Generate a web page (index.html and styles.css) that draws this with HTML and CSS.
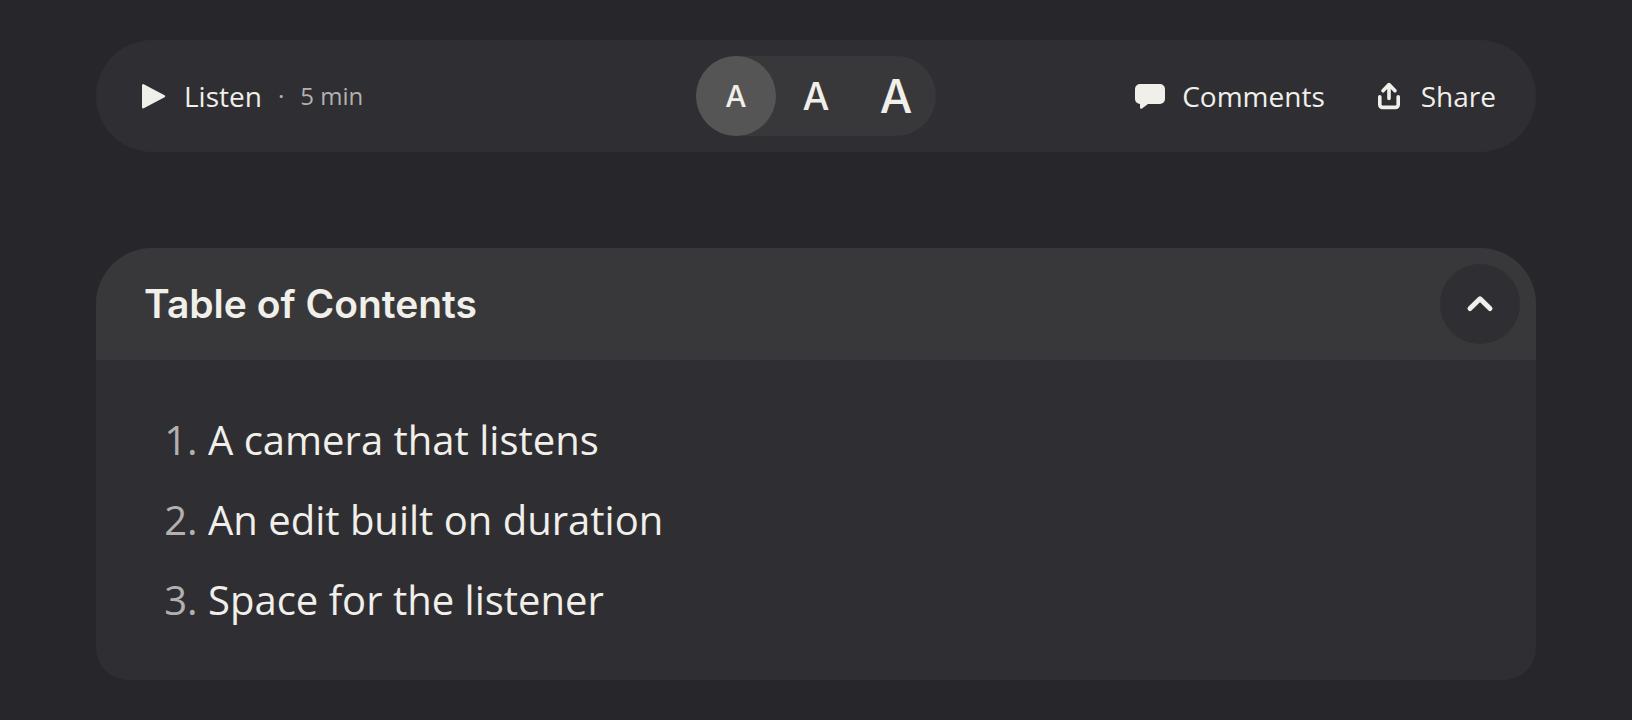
FILE: index.html
```html
<!DOCTYPE html>
<html lang="en">
<head>
    <meta charset="UTF-8">
    <meta name="viewport" content="width=device-width, initial-scale=1.0">
    <title>Article</title>
    <link rel="stylesheet" href="styles.css">
</head>
<body>
    <main class="article">
        <div class="toolbar">
            <div class="toolbar-start">
                <button type="button" class="action">
                    <svg class="icon" viewBox="0 0 32 32" aria-hidden="true">
                        <path d="M7.2 5.2v22L28 16.2z" fill="currentColor" stroke="currentColor" stroke-width="2.4" stroke-linejoin="round"></path>
                    </svg>
                    Listen
                </button>
                <span class="separator">·</span>
                <span class="duration">5 min</span>
            </div>

            <div class="text-size" role="group" aria-label="Text size">
                <button type="button" class="size size-small active" aria-pressed="true">A</button>
                <button type="button" class="size size-medium" aria-pressed="false">A</button>
                <button type="button" class="size size-large" aria-pressed="false">A</button>
            </div>

            <div class="toolbar-end">
                <button type="button" class="action">
                    <svg class="icon" viewBox="0 0 32 32" aria-hidden="true">
                        <path d="M6 4h20a5 5 0 0 1 5 5v10a5 5 0 0 1-5 5H14l-6 4.500Q6 29.500 6 27.500V24a5 5 0 0 1-5-5V9a5 5 0 0 1 5-5z" fill="currentColor"></path>
                    </svg>
                    Comments
                </button>
                <button type="button" class="action">
                    <svg class="icon" viewBox="0 0 32 32" aria-hidden="true" fill="none" stroke="currentColor" stroke-width="3.6" stroke-linecap="round" stroke-linejoin="round">
                        <path d="M6.8 16.800v8a2.600 2.600 0 0 0 2.600 2.600h13.200a2.600 2.600 0 0 0 2.600-2.600v-8"></path>
                        <path d="M16 5v13.500M10 10.800l6-6.200 6 6.200"></path>
                    </svg>
                    Share
                </button>
            </div>
        </div>

        <section class="toc">
            <header class="toc-header">
                <h2>Table of Contents</h2>
                <button type="button" class="toggle" aria-expanded="true" aria-controls="toc-list" aria-label="Collapse table of contents">
                    <svg class="icon" viewBox="0 0 32 32" aria-hidden="true">
                        <path d="M6 20.500l10-9.700 10 9.700" fill="none" stroke="currentColor" stroke-width="5" stroke-linecap="round" stroke-linejoin="round"></path>
                    </svg>
                </button>
            </header>
            <ol class="toc-list" id="toc-list">
                <li><a href="#camera">A camera that listens</a></li>
                <li><a href="#edit">An edit built on duration</a></li>
                <li><a href="#space">Space for the listener</a></li>
            </ol>
        </section>
    </main>
</body>
</html>
```
FILE: styles.css
```css
* {
    box-sizing: border-box;
}
body {
    margin: 0;
    background-color: #27262b;
    color: #f0efe9;
    font-family: "Open Sans", sans-serif;
}
button {
    padding: 0;
    border: none;
    background: none;
    color: inherit;
    font: inherit;
    cursor: pointer;
}
.article {
    padding: 40px 96px;
}
.icon {
    width: 32px;
    height: 32px;
    flex: none;
}

/* toolbar */
.toolbar {
    display: grid;
    grid-template-columns: 1fr auto 1fr;
    align-items: center;
    padding: 16px 40px;
    border-radius: 56px;
    background-color: #2f2e33;
}
.toolbar-start,
.toolbar-end {
    display: flex;
    align-items: center;
}
.toolbar-start {
    gap: 16px;
}
.toolbar-end {
    justify-content: flex-end;
    gap: 48px;
}
.action {
    display: flex;
    align-items: center;
    gap: 16px;
    font-size: 28px;
    font-weight: 500;
    line-height: 32px;
}
.separator,
.duration {
    color: #b2b1ae;
    font-size: 24px;
    line-height: 32px;
}

.text-size {
    display: flex;
    border-radius: 40px;
    background-color: #38383a;
}
.size {
    width: 80px;
    height: 80px;
    border-radius: 50%;
    font-family: Inter, sans-serif;
    font-weight: 500;
}
.size.active {
    background-color: #555556;
}
.size-small {
    font-size: 30px;
}
.size-medium {
    font-size: 38px;
}
.size-large {
    font-size: 46px;
}

/* table of contents */
.toc {
    margin-top: 96px;
    border-radius: 56px 56px 32px 32px;
    background-color: #2f2e33;
    overflow: hidden;
}
.toc-header {
    display: flex;
    align-items: center;
    justify-content: space-between;
    padding: 16px 16px 16px 48px;
    background-color: #38383a;
}
.toc-header h2 {
    margin: 0;
    font-family: Inter, sans-serif;
    font-size: 39px;
    font-weight: 600;
    line-height: 48px;
}
.toggle {
    display: flex;
    align-items: center;
    justify-content: center;
    width: 80px;
    height: 80px;
    border-radius: 50%;
    background-color: #2f2e33;
}
.toc-list {
    margin: 0;
    padding: 40px 48px 40px 112px;
    font-size: 40px;
    line-height: 80px;
}
.toc-list li::marker {
    color: #b2b1ae;
}
.toc-list a {
    color: inherit;
    text-decoration: none;
}
```
